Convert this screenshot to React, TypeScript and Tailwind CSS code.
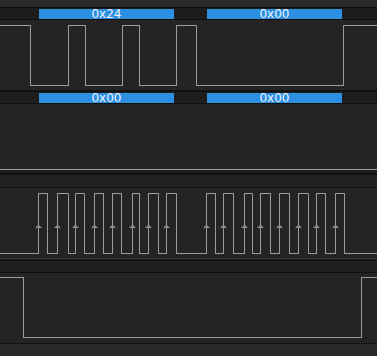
import React from "react";

const W = 377;
const clockPulses: [number, number][] = [
  [38, 47], [57, 68], [75, 84], [94, 103], [112, 121], [132, 139], [148, 158], [166, 176],
  [206, 215], [223, 233], [244, 252], [260, 270], [279, 289], [298, 308], [316, 325], [335, 344],
];

function clockPath(hi: number, lo: number) {
  let d = `M0 ${lo}`;
  for (const [r, f] of clockPulses) {
    d += ` H${r + 0.5} V${hi} H${f + 0.5} V${lo}`;
  }
  return d + ` H${W}`;
}

function Wave({ h, d, arrows }: { h: number; d: string; arrows?: number }) {
  return (
    <svg width={W} height={h} className="block">
      <path d={d} fill="none" stroke="#9b9b9b" strokeWidth={1} shapeRendering="crispEdges" />
      {arrows !== undefined &&
        clockPulses.map(([r]) => (
          <polygon
            key={r}
            points={`${r + 0.5 - 3.5},${arrows + 3} ${r + 0.5 + 3.5},${arrows + 3} ${r + 0.5},${arrows - 0.5}`}
            fill="#8a8a8a"
          />
        ))}
    </svg>
  );
}

function DecodeRow({ labels }: { labels: string[] }) {
  return (
    <div className="flex h-[11px] pt-px bg-[#1d1d1d]">
      <div className="ml-[39px] w-[135px] h-[10px] bg-[#2b8fe2] text-center text-[12px] leading-[10px] text-[#eef4ff]">
        {labels[0]}
      </div>
      <div className="ml-[33px] w-[135px] h-[10px] bg-[#2b8fe2] text-center text-[12px] leading-[10px] text-[#eef4ff]">
        {labels[1]}
      </div>
    </div>
  );
}

export default function App() {
  return (
    <div
      className="w-[377px] h-[356px] overflow-hidden bg-[#242424] flex flex-col"
      style={{ fontFamily: '"DejaVu Sans", "Liberation Sans", sans-serif' }}
    >
      <div className="h-[7px] bg-[#2a2a2a]" />
      <div className="h-px bg-[#0f0f0f]" />
      <DecodeRow labels={["0x24", "0x00"]} />
      <div className="h-px bg-[#0f0f0f]" />
      <Wave
        h={70}
        d="M0 5.5 H30.5 V65.5 H68.5 V5.5 H85.5 V65.5 H122.5 V5.5 H139.5 V65.5 H176.5 V5.5 H196.5 V65.5 H343.5 V5.5 H377"
      />
      <div className="h-[2px] bg-[#121212]" />
      <DecodeRow labels={["0x00", "0x00"]} />
      <div className="h-px bg-[#0f0f0f]" />
      <Wave h={66} d="M0 65.5 H377" />
      <div className="h-[3px] bg-[#1c1c1c]" />
      <div className="h-[2px] bg-[#111111]" />
      <div className="h-[12px] bg-[#222222]" />
      <div className="h-px bg-[#0f0f0f]" />
      <Wave h={70} d={clockPath(5.5, 65.5)} arrows={37} />
      <div className="h-px bg-[#333333]" />
      <div className="h-px bg-[#1c1c1c]" />
      <div className="h-px bg-[#0f0f0f]" />
      <div className="h-[11px] bg-[#1f1f1f]" />
      <div className="h-px bg-[#0f0f0f]" />
      <Wave h={70} d="M0 4.5 H23.5 V64.5 H361.5 V4.5 H377" />
      <div className="h-px bg-[#111111]" />
      <div className="flex-1 bg-[#292929]" />
    </div>
  );
}
